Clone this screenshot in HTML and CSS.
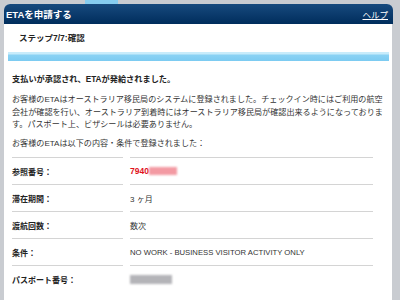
FILE: index.html
```html
<!DOCTYPE html>
<html lang="ja">
<head>
    <meta charset="UTF-8">
    <title>ETAを申請する</title>
    <link rel="stylesheet" href="styles.css">
</head>
<body>

<div class="tabstrip"><span></span></div>

<div class="panel">
    <div class="panel-head">
        <span class="panel-title">ETAを申請する</span>
        <a class="help" href="#">ヘルプ</a>
    </div>

    <div class="step">ステップ7/7:確認</div>
    <div class="progress"></div>

    <div class="content">
        <p class="lead">支払いが承認され、ETAが発給されました。</p>
        <p class="para">お客様のETAはオーストラリア移民局のシステムに登録されました。チェックイン時にはご利用の航空会社が確認を行い、オーストラリア到着時にはオーストラリア移民局が確認出来るようになっております。パスポート上、ビザシールは必要ありません。</p>
        <p class="para intro">お客様のETAは以下の内容・条件で登録されました：</p>

        <div class="details">
            <div class="label">参照番号：</div>
            <div class="value ref">7940<span class="blur blur-red"></span></div>

            <div class="label">滞在期間：</div>
            <div class="value">3 ヶ月</div>

            <div class="label">渡航回数：</div>
            <div class="value">数次</div>

            <div class="label">条件：</div>
            <div class="value">NO WORK - BUSINESS VISITOR ACTIVITY ONLY</div>

            <div class="label">パスポート番号：</div>
            <div class="value"><span class="blur blur-grey"></span></div>
        </div>
    </div>
</div>

</body>
</html>
```

FILE: styles.css
```css
body {
    margin: 0;
    background-color: #c9ccd1;
    font-family: "Liberation Sans", "Noto Sans CJK JP", sans-serif;
    color: #222;
    overflow: hidden;
}
.tabstrip {
    height: 4px;
}
.tabstrip span {
    display: block;
    width: 33px;
    height: 4px;
    margin-left: 85px;
    background-color: #86cdf0;
}
.panel {
    margin: 0 8px 0 4px;
    background-color: #fff;
    border-radius: 6px 6px 0 0;
    height: 296px;
}
.panel-head {
    height: 20px;
    display: flex;
    justify-content: space-between;
    align-items: center;
    padding: 0 5px 0 2px;
    margin-right: -1px;
    background: linear-gradient(#174a7e, #002d5c);
    border-radius: 6px 6px 0 0;
    color: #fff;
}
.panel-title {
    font-size: 9.5px;
    font-weight: bold;
}
.help {
    color: #fff;
    font-size: 8.5px;
    text-decoration: underline;
}
.step {
    height: 28px;
    line-height: 28px;
    padding-left: 15px;
    font-size: 8.5px;
    font-weight: bold;
}
.progress {
    height: 9px;
    margin: 0 3px 0 4px;
    background: linear-gradient(#c8ecfb 0, #c8ecfb 2px, #8ad2f4 3px, #7ccbf1 100%);
}
.content {
    padding: 0 4px 0 8px;
}
.content p {
    margin: 0;
}
.lead {
    margin-top: 13px !important;
    font-size: 8.2px;
    line-height: 12px;
    font-weight: bold;
}
.para {
    margin-top: 8px !important;
    font-size: 8.1px;
    line-height: 12.5px;
    color: #333;
}
.intro {
    margin-top: 6px !important;
    margin-bottom: 7px !important;
}
.details {
    display: grid;
    grid-template-columns: 111px 243px;
    grid-auto-rows: 27px;
    column-gap: 7px;
    font-size: 8px;
}
.label, .value {
    display: flex;
    align-items: center;
    border-top: 1px solid #d4d4d4;
}
.label {
    font-weight: bold;
}
.value {
    color: #333;
}
.value:nth-child(8) {
    font-size: 7.7px;
}
.ref {
    color: #e0121c;
    font-weight: bold;
    font-size: 8.5px;
}
.blur {
    display: inline-block;
    height: 8px;
    filter: blur(1px);
}
.blur-red {
    width: 28px;
    background-color: #f39aa3;
}
.blur-grey {
    width: 42px;
    height: 9px;
    background-color: #b4b4b8;
}
```
